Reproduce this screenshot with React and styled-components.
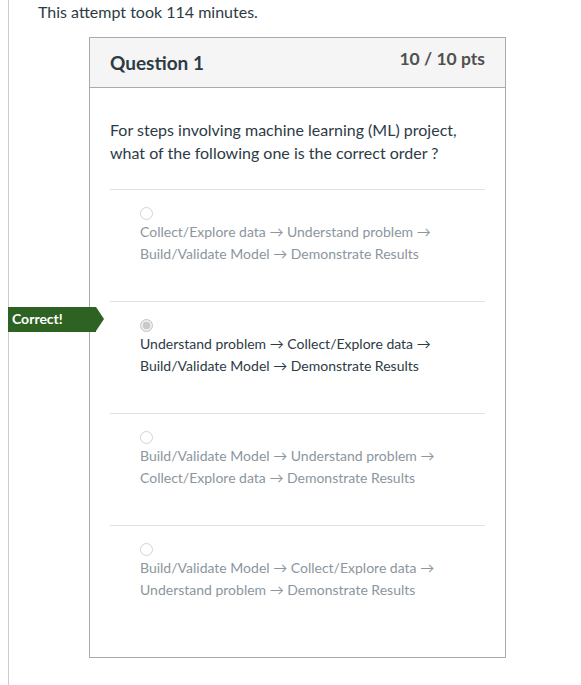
import styled, { createGlobalStyle } from "styled-components"

const answers = [
  {
    text: ["Collect/Explore data → Understand problem →", "Build/Validate Model → Demonstrate Results"],
    correct: false,
  },
  {
    text: ["Understand problem → Collect/Explore data →", "Build/Validate Model → Demonstrate Results"],
    correct: true,
  },
  {
    text: ["Build/Validate Model → Understand problem →", "Collect/Explore data → Demonstrate Results"],
    correct: false,
  },
  {
    text: ["Build/Validate Model → Collect/Explore data →", "Understand problem → Demonstrate Results"],
    correct: false,
  },
]

export default function App() {
  return (
    <>
      <GlobalStyle />
      <Page>
        <Attempt>This attempt took 114 minutes.</Attempt>
        <Card>
          <CardHeader>
            <Title>Question 1</Title>
            <Points>10 / 10 pts</Points>
          </CardHeader>
          <CardBody>
            <QuestionText>
              For steps involving machine learning (ML) project,
              <br />
              what of the following one is the correct order ?
            </QuestionText>
            {answers.map((a, i) => (
              <Answer key={i}>
                {a.correct && <CorrectTag>Correct!</CorrectTag>}
                <Radio $checked={a.correct} />
                <AnswerText $selected={a.correct}>
                  {a.text[0]}
                  <br />
                  {a.text[1]}
                </AnswerText>
              </Answer>
            ))}
          </CardBody>
        </Card>
      </Page>
    </>
  )
}

const GlobalStyle = createGlobalStyle`
  body {
    margin: 0;
    background: #fff;
    font-family: Lato, "Open Sans", sans-serif;
    color: #2d3b45;
  }
`

const Page = styled.div`
  margin-left: 8px;
  min-height: 685px;
  border-left: 1px solid #c7cdd1;
  padding-top: 2px;
  box-sizing: border-box;
`

const Attempt = styled.div`
  padding-left: 29px;
  font-size: 16px;
  line-height: 20px;
`

const Card = styled.div`
  margin: 15px 0 0 80px;
  width: 417px;
  border: 1px solid #aaa;
  box-sizing: border-box;
`

const CardHeader = styled.div`
  display: flex;
  justify-content: space-between;
  align-items: flex-start;
  height: 50px;
  box-sizing: border-box;
  padding: 0 20px;
  background: #f5f5f5;
  border-bottom: 1px solid #aaa;
`

const Title = styled.h2`
  margin: 13px 0 0;
  font-size: 19px;
  line-height: 24px;
  font-weight: 700;
  color: #2d3b45;
`

const Points = styled.div`
  margin-top: 10px;
  font-size: 17.5px;
  line-height: 22px;
  font-weight: 700;
  color: #505050;
`

const CardBody = styled.div`
  padding: 30px 20px 20px;
`

const QuestionText = styled.div`
  font-size: 16px;
  line-height: 23px;
  margin-bottom: 25px;
`

const Answer = styled.div`
  position: relative;
  border-top: 1px solid #dfe1e3;
  padding: 17px 0 36px 30px;
  height: 112px;
  box-sizing: border-box;
`

const Radio = styled.span`
  display: block;
  width: 13px;
  height: 13px;
  box-sizing: border-box;
  border-radius: 50%;
  border: 1px solid ${({ $checked }) => ($checked ? "#c4c4c4" : "#d4d4d4")};
  background: ${({ $checked }) =>
    $checked ? "radial-gradient(circle, #c9c9c9 0 3.5px, #ececec 4px)" : "#fff"};
  margin-bottom: 1px;
`

const AnswerText = styled.div`
  font-size: 14px;
  line-height: 22px;
  color: ${({ $selected }) => ($selected ? "#2d3b45" : "#8b969e")};
`

const CorrectTag = styled.div`
  position: absolute;
  left: -102px;
  top: 5px;
  height: 25px;
  width: 88px;
  box-sizing: border-box;
  padding-left: 4px;
  background: #2d6223;
  color: #fff;
  font-size: 14px;
  font-weight: 700;
  line-height: 24px;

  &::after {
    content: "";
    position: absolute;
    right: -8px;
    top: 0;
    border-style: solid;
    border-width: 12.5px 0 12.5px 8px;
    border-color: transparent transparent transparent #2d6223;
  }
`
